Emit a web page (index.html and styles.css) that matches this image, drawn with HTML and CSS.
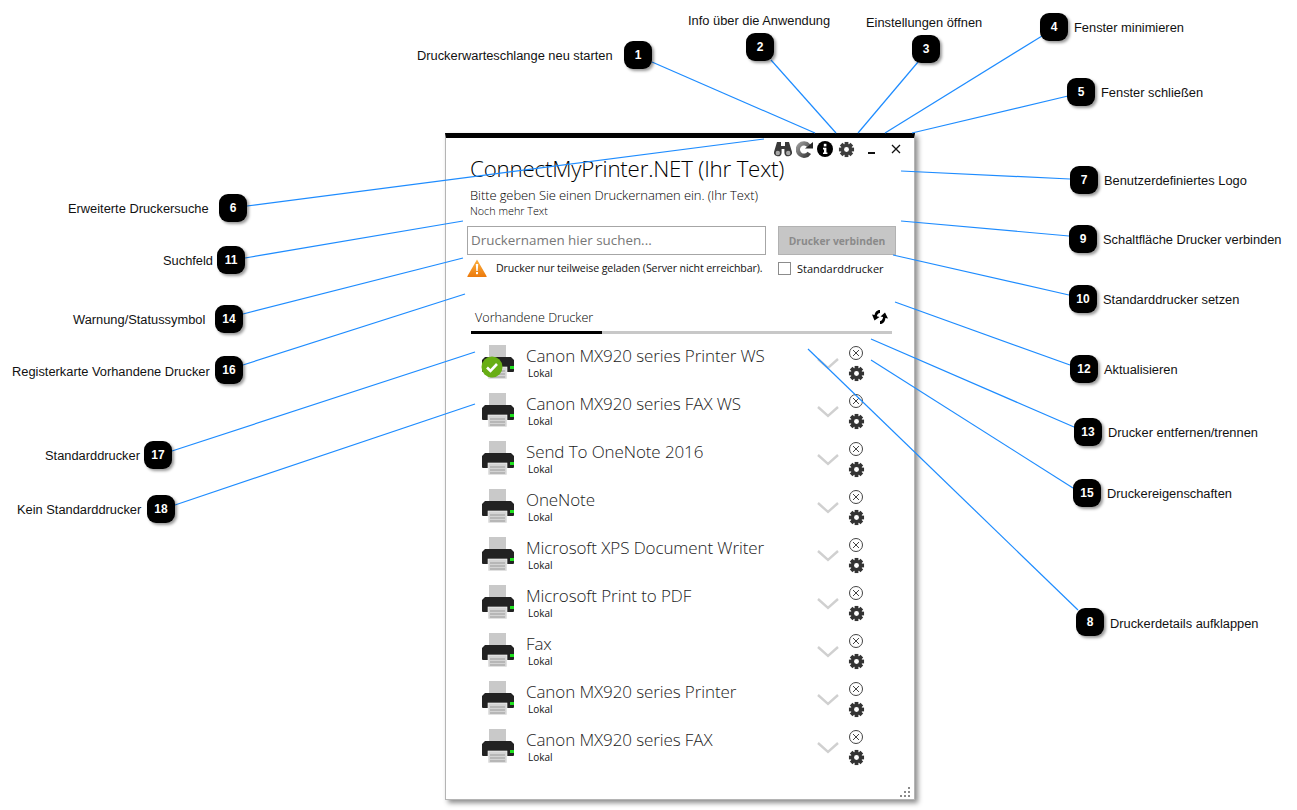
FILE: index.html
```html
<!DOCTYPE html>
<html lang="de">
<head>
    <meta charset="UTF-8">
    <title>ConnectMyPrinter.NET</title>
    <link rel="stylesheet" href="styles.css">
</head>
<body>
<svg class="defs" width="0" height="0">
    <symbol id="gear" viewBox="-9 -9 18 18">
        <g fill="currentColor">
            <rect x="-2" y="-8" width="4" height="16"/>
            <rect x="-2" y="-8" width="4" height="16" transform="rotate(45)"/>
            <rect x="-2" y="-8" width="4" height="16" transform="rotate(90)"/>
            <rect x="-2" y="-8" width="4" height="16" transform="rotate(135)"/>
            <circle r="6"/>
        </g>
        <circle r="2.6" fill="#fff"/>
    </symbol>
    <symbol id="printer" viewBox="0 0 34 36">
        <rect x="8" y="1" width="17" height="14" fill="#c9c9c9"/>
        <path d="M4 13h26l3 3v11a1 1 0 0 1-1 1H2a1 1 0 0 1-1-1V16z" fill="#222"/>
        <rect x="29" y="22" width="4" height="3" fill="#1fe01f"/>
        <rect x="7" y="23" width="19" height="12" fill="#d4d4d4" stroke="#fff" stroke-width=".6"/>
        <path d="M9 27h15M9 30h15M9 33h15" stroke="#9a9a9a"/>
    </symbol>
    <symbol id="remove" viewBox="0 0 16 16">
        <circle cx="8" cy="8" r="6.5" fill="none" stroke="#444"/>
        <path d="M5 5l6 6M11 5l-6 6" stroke="#444" fill="none"/>
    </symbol>
    <symbol id="chevron" viewBox="0 0 24 14">
        <path d="M2 2l10 9 10-9" fill="none" stroke="#d0d0d0" stroke-width="2.4"/>
    </symbol>
</svg>

<div class="window">
    <div class="toolbar">
        <svg class="tool tool-find" viewBox="0 0 18 16">
            <path d="M3 1h4v4h4V1h4l3 10a3.800 3.800 0 1 1-7.600 1V8H7.600v4A3.800 3.800 0 1 1 0 11z" fill="#3a3a3a"/>
            <circle cx="3.800" cy="12" r="2.200" fill="#a8a8a8"/>
            <circle cx="14.200" cy="12" r="2.200" fill="#a8a8a8"/>
        </svg>
        <svg class="tool tool-reload" viewBox="0 0 18 18">
            <defs>
                <linearGradient id="reload-fill" x1="0" y1="0" x2="1" y2="1">
                    <stop offset="0" stop-color="#9a9a9a"/>
                    <stop offset="1" stop-color="#3c3c3c"/>
                </linearGradient>
            </defs>
            <path d="M14 12.500a6.500 6.500 0 1 1-.5-7.500" fill="none" stroke="url(#reload-fill)" stroke-width="4.500"/>
            <path d="M9.500 8L18 1v7z" fill="#2a2a2a"/>
        </svg>
        <svg class="tool tool-info" viewBox="0 0 16 16">
            <circle cx="8" cy="8" r="8" fill="#000"/>
            <rect x="6.800" y="2.800" width="2.600" height="2.600" fill="#fff"/>
            <path d="M6 6.800h3.400v4.600h1V13H6v-1.600h1V8.400H6z" fill="#fff"/>
        </svg>
        <svg class="tool tool-gear"><use href="#gear"/></svg>
        <span class="tool-min"></span>
        <svg class="tool tool-close" viewBox="0 0 10 10">
            <path d="M1 1l8 8M9 1l-8 8" stroke="#111" stroke-width="1.300"/>
        </svg>
    </div>

    <div class="head">
        <h1>ConnectMyPrinter.NET (Ihr Text)</h1>
        <p class="sub">Bitte geben Sie einen Druckernamen ein. (Ihr Text)</p>
        <p class="more">Noch mehr Text</p>
    </div>

    <div class="search-row">
        <div class="search">Druckernamen hier suchen...</div>
        <button class="connect">Drucker verbinden</button>
    </div>

    <div class="status-row">
        <svg class="warn" viewBox="0 0 20 18">
            <defs>
                <linearGradient id="warn-fill" x1="0" y1="0" x2="0" y2="1">
                    <stop offset="0" stop-color="#fbb040"/>
                    <stop offset="1" stop-color="#ec7a0c"/>
                </linearGradient>
            </defs>
            <path d="M10 0.500l9.500 16.500a.6.6 0 0 1-.5 1H1a.6.6 0 0 1-.5-1z" fill="url(#warn-fill)"/>
            <path d="M8.800 5h2.400l-.5 7H9.300z" fill="#fff"/>
            <rect x="9" y="13" width="2" height="2.200" fill="#fff"/>
        </svg>
        <span class="status-text">Drucker nur teilweise geladen (Server nicht erreichbar).</span>
        <label class="default-check"><span class="box"></span>Standarddrucker</label>
    </div>

    <div class="tabs">
        <div class="tab-head">
            <span class="tab-title">Vorhandene Drucker</span>
            <svg class="refresh" viewBox="0 0 18 18">
                <path d="M9 2C5.500 2 4 4.500 3.600 7L1 6.500l2.500 6 5-3.500-2.600-.8C6.200 6.500 7.200 5 9 5z" fill="#000"/>
                <path d="M9 16c3.500 0 5-2.500 5.400-6L17 10.500 14 4.500 9.500 8.500l2.600.5C11.800 11 10.800 13 9 13z" fill="#000"/>
            </svg>
        </div>
        <div class="tab-line"><div class="tab-line-on"></div></div>
    </div>

    <ul class="printers">
        <li class="printer">
            <div class="p-icon">
                <svg class="p-img"><use href="#printer"/></svg>
                <svg class="p-ok" viewBox="0 0 22 22">
                    <circle cx="11" cy="11" r="10.500" fill="#68ae14"/>
                    <path d="M6 11.500l3.500 3.500 6.500-7" fill="none" stroke="#fff" stroke-width="2.600"/>
                </svg>
            </div>
            <div class="p-text"><div class="p-name">Canon MX920 series Printer WS</div><div class="p-loc">Lokal</div></div>
            <svg class="p-chev"><use href="#chevron"/></svg>
            <div class="p-actions"><svg class="p-x"><use href="#remove"/></svg><svg class="p-gear"><use href="#gear"/></svg></div>
        </li>
        <li class="printer">
            <div class="p-icon"><svg class="p-img"><use href="#printer"/></svg></div>
            <div class="p-text"><div class="p-name">Canon MX920 series FAX WS</div><div class="p-loc">Lokal</div></div>
            <svg class="p-chev"><use href="#chevron"/></svg>
            <div class="p-actions"><svg class="p-x"><use href="#remove"/></svg><svg class="p-gear"><use href="#gear"/></svg></div>
        </li>
        <li class="printer">
            <div class="p-icon"><svg class="p-img"><use href="#printer"/></svg></div>
            <div class="p-text"><div class="p-name">Send To OneNote 2016</div><div class="p-loc">Lokal</div></div>
            <svg class="p-chev"><use href="#chevron"/></svg>
            <div class="p-actions"><svg class="p-x"><use href="#remove"/></svg><svg class="p-gear"><use href="#gear"/></svg></div>
        </li>
        <li class="printer">
            <div class="p-icon"><svg class="p-img"><use href="#printer"/></svg></div>
            <div class="p-text"><div class="p-name">OneNote</div><div class="p-loc">Lokal</div></div>
            <svg class="p-chev"><use href="#chevron"/></svg>
            <div class="p-actions"><svg class="p-x"><use href="#remove"/></svg><svg class="p-gear"><use href="#gear"/></svg></div>
        </li>
        <li class="printer">
            <div class="p-icon"><svg class="p-img"><use href="#printer"/></svg></div>
            <div class="p-text"><div class="p-name">Microsoft XPS Document Writer</div><div class="p-loc">Lokal</div></div>
            <svg class="p-chev"><use href="#chevron"/></svg>
            <div class="p-actions"><svg class="p-x"><use href="#remove"/></svg><svg class="p-gear"><use href="#gear"/></svg></div>
        </li>
        <li class="printer">
            <div class="p-icon"><svg class="p-img"><use href="#printer"/></svg></div>
            <div class="p-text"><div class="p-name">Microsoft Print to PDF</div><div class="p-loc">Lokal</div></div>
            <svg class="p-chev"><use href="#chevron"/></svg>
            <div class="p-actions"><svg class="p-x"><use href="#remove"/></svg><svg class="p-gear"><use href="#gear"/></svg></div>
        </li>
        <li class="printer">
            <div class="p-icon"><svg class="p-img"><use href="#printer"/></svg></div>
            <div class="p-text"><div class="p-name">Fax</div><div class="p-loc">Lokal</div></div>
            <svg class="p-chev"><use href="#chevron"/></svg>
            <div class="p-actions"><svg class="p-x"><use href="#remove"/></svg><svg class="p-gear"><use href="#gear"/></svg></div>
        </li>
        <li class="printer">
            <div class="p-icon"><svg class="p-img"><use href="#printer"/></svg></div>
            <div class="p-text"><div class="p-name">Canon MX920 series Printer</div><div class="p-loc">Lokal</div></div>
            <svg class="p-chev"><use href="#chevron"/></svg>
            <div class="p-actions"><svg class="p-x"><use href="#remove"/></svg><svg class="p-gear"><use href="#gear"/></svg></div>
        </li>
        <li class="printer">
            <div class="p-icon"><svg class="p-img"><use href="#printer"/></svg></div>
            <div class="p-text"><div class="p-name">Canon MX920 series FAX</div><div class="p-loc">Lokal</div></div>
            <svg class="p-chev"><use href="#chevron"/></svg>
            <div class="p-actions"><svg class="p-x"><use href="#remove"/></svg><svg class="p-gear"><use href="#gear"/></svg></div>
        </li>
    </ul>

    <svg class="grip" viewBox="0 0 10 10">
        <path d="M8 0h2v2H8zM4 4h2v2H4zM8 4h2v2H8zM0 8h2v2H0zM4 8h2v2H4zM8 8h2v2H8z" fill="#8a8a8a"/>
    </svg>
</div>

<!-- Verbindungslinien der Beschriftungen -->
<svg class="leaders" viewBox="0 0 1297 810">
    <g stroke="#1e8cff" stroke-width="1.200">
        <line x1="652" y1="62" x2="815" y2="133"/>
        <line x1="771" y1="60" x2="836" y2="133"/>
        <line x1="918" y1="62" x2="858" y2="133"/>
        <line x1="1042" y1="36" x2="885" y2="133"/>
        <line x1="1068" y1="96" x2="912" y2="133"/>
        <line x1="247" y1="206" x2="764" y2="139"/>
        <line x1="1070" y1="179" x2="901" y2="171"/>
        <line x1="1078" y1="610" x2="808" y2="349"/>
        <line x1="1069" y1="236" x2="901" y2="221"/>
        <line x1="1069" y1="295" x2="893" y2="255"/>
        <line x1="245" y1="258" x2="463" y2="221"/>
        <line x1="1070" y1="365" x2="895" y2="302"/>
        <line x1="1074" y1="427" x2="871" y2="339"/>
        <line x1="243" y1="314" x2="463" y2="258"/>
        <line x1="1073" y1="488" x2="871" y2="360"/>
        <line x1="243" y1="365" x2="465" y2="294"/>
        <line x1="172" y1="451" x2="475" y2="352"/>
        <line x1="175" y1="505" x2="475" y2="404"/>
    </g>
</svg>

<span class="label l1">Druckerwarteschlange neu starten</span><span class="badge b1">1</span>
<span class="label l2">Info über die Anwendung</span><span class="badge b2">2</span>
<span class="label l3">Einstellungen öffnen</span><span class="badge b3">3</span>
<span class="label l4">Fenster minimieren</span><span class="badge b4">4</span>
<span class="label l5">Fenster schließen</span><span class="badge b5">5</span>
<span class="label l6">Erweiterte Druckersuche</span><span class="badge b6">6</span>
<span class="label l7">Benutzerdefiniertes Logo</span><span class="badge b7">7</span>
<span class="label l8">Druckerdetails aufklappen</span><span class="badge b8">8</span>
<span class="label l9">Schaltfläche Drucker verbinden</span><span class="badge b9">9</span>
<span class="label l10">Standarddrucker setzen</span><span class="badge b10">10</span>
<span class="label l11">Suchfeld</span><span class="badge b11">11</span>
<span class="label l12">Aktualisieren</span><span class="badge b12">12</span>
<span class="label l13">Drucker entfernen/trennen</span><span class="badge b13">13</span>
<span class="label l14">Warnung/Statussymbol</span><span class="badge b14">14</span>
<span class="label l15">Druckereigenschaften</span><span class="badge b15">15</span>
<span class="label l16">Registerkarte Vorhandene Drucker</span><span class="badge b16">16</span>
<span class="label l17">Standarddrucker</span><span class="badge b17">17</span>
<span class="label l18">Kein Standarddrucker</span><span class="badge b18">18</span>
</body>
</html>
```

FILE: styles.css
```css
*{
    margin: 0;
    padding: 0;
    box-sizing: border-box;
    list-style: none;
}
html,body{
    width: 100%;
    height: 810px;
    overflow: hidden;
    background-color: #fff;
}
body{
    position: relative;
    font-family: "Liberation Sans", Arial, sans-serif;
}
.defs{
    position: absolute;
}

/* Fenster */
.window{
    position: absolute;
    left: 445px;
    top: 133px;
    width: 470px;
    height: 667px;
    background-color: #fff;
    border: 1px solid #b4b4b4;
    border-top: 5px solid #000;
    box-shadow: 3px 3px 5px rgba(0,0,0,.45);
    font-family: "Open Sans", "Noto Sans", sans-serif;
    color: #111;
}
.toolbar{
    display: flex;
    align-items: center;
    height: 20px;
    margin-top: 1px;
    padding-left: 328px;
}
.tool{
    display: block;
    flex: none;
}
.tool-find{
    width: 18px;
    height: 16px;
}
.tool-reload{
    width: 17px;
    height: 17px;
    margin-left: 4px;
}
.tool-info{
    width: 16px;
    height: 16px;
    margin-left: 4px;
}
.tool-gear{
    width: 17px;
    height: 17px;
    margin-left: 5px;
    color: #3c3c3c;
}
.tool-min{
    width: 7px;
    height: 2px;
    margin: 7px 0 0 13px;
    background-color: #111;
}
.tool-close{
    width: 10px;
    height: 10px;
    margin-left: 16px;
}

.head{
    padding: 0 0 0 24px;
    height: 69px;
}
h1{
    margin-top: -3px;
    font-size: 22.300px;
    font-weight: 300;
    line-height: 26px;
    white-space: nowrap;
    letter-spacing: -.2px;
    color: #000;
}
.sub{
    margin-top: 5px;
    font-size: 13px;
    font-weight: 300;
    line-height: 16px;
    letter-spacing: -.1px;
    color: #000;
}
.more{
    margin-top: 1px;
    font-size: 10.800px;
    line-height: 14px;
    font-weight: 300;
    color: #000;
}

.search-row{
    display: flex;
    padding-left: 21px;
    margin-top: 1px;
}
.search{
    width: 299px;
    height: 29px;
    padding-left: 3px;
    border: 1px solid #a6a6a6;
    font-size: 13.400px;
    font-weight: 400;
    line-height: 27px;
    color: #777;
}
.connect{
    width: 118px;
    height: 29px;
    margin-left: 12px;
    border: 1px solid #b2b2b2;
    background-color: #c6c6c6;
    font-family: "Open Sans", sans-serif;
    font-size: 10.300px;
    font-weight: 700;
    color: #8a8a8a;
}
.status-row{
    display: flex;
    align-items: center;
    height: 24px;
    padding-left: 21px;
    margin-top: 1px;
}
.warn{
    flex: none;
    width: 20px;
    height: 18px;
}
.status-text{
    width: 291px;
    padding-left: 9px;
    font-size: 10.600px;
    font-weight: 400;
    white-space: nowrap;
    letter-spacing: -.1px;
}
.default-check{
    display: flex;
    align-items: center;
    font-size: 11px;
}
.box{
    width: 13px;
    height: 13px;
    margin-right: 6px;
    border: 1px solid #8c8c8c;
}

.tabs{
    padding: 0 22px 0 25px;
    margin-top: 23px;
}
.tab-head{
    display: flex;
    align-items: center;
    justify-content: space-between;
    height: 28px;
    padding: 0 3px 0 4px;
}
.tab-title{
    font-size: 12.600px;
    font-weight: 300;
    color: #000;
}
.refresh{
    width: 18px;
    height: 18px;
}
.tab-line{
    height: 3px;
    background-color: #c8c8c8;
}
.tab-line-on{
    width: 131px;
    height: 3px;
    background-color: #000;
}

/* Druckerliste */
.printers{
    margin-top: 9px;
}
.printer{
    display: flex;
    height: 48px;
    padding-left: 35px;
}
.p-icon{
    position: relative;
    flex: none;
    width: 34px;
    height: 36px;
    margin-top: 1px;
}
.p-img{
    display: block;
    width: 34px;
    height: 36px;
}
.p-ok{
    position: absolute;
    left: 0;
    top: 12px;
    width: 22px;
    height: 22px;
}
.p-text{
    width: 291px;
    padding-left: 11px;
}
.p-name{
    font-size: 17px;
    font-weight: 300;
    line-height: 22px;
    margin-top: 2px;
    color: #222;
    letter-spacing: -.1px;
}
.p-loc{
    padding-left: 2px;
    font-size: 10px;
    line-height: 12px;
    color: #111;
}
.p-chev{
    flex: none;
    width: 24px;
    height: 14px;
    margin: 14px 0 0 10px;
}
.p-actions{
    display: flex;
    flex-direction: column;
    align-items: center;
    width: 16px;
    margin-left: 8px;
    margin-top: 2px;
}
.p-x{
    width: 16px;
    height: 16px;
}
.p-gear{
    width: 17px;
    height: 17px;
    margin-top: 4px;
    color: #333;
}
.grip{
    position: absolute;
    right: 4px;
    bottom: 2px;
    width: 10px;
    height: 10px;
}

/* Beschriftungen */
.leaders{
    position: absolute;
    left: 0;
    top: 0;
    width: 1297px;
    height: 810px;
}
.label{
    position: absolute;
    margin-top: 1px;
    font-size: 12.850px;
    line-height: 14px;
    white-space: nowrap;
    color: #111;
}
.badge{
    position: absolute;
    display: flex;
    align-items: center;
    justify-content: center;
    width: 28px;
    height: 28px;
    border-radius: 9px;
    background-color: #000;
    box-shadow: 2px 2px 3px rgba(0,0,0,.4);
    color: #fff;
    font-size: 12px;
    font-weight: 700;
}
.l1{left: 417px; top: 48px;}
.b1{left: 624px; top: 41px;}
.l2{left: 688px; top: 13px;}
.b2{left: 746px; top: 33px;}
.l3{left: 866px; top: 15px;}
.b3{left: 912px; top: 35px;}
.l4{left: 1074px; top: 20px;}
.b4{left: 1040px; top: 13px;}
.l5{left: 1101px; top: 85px;}
.b5{left: 1067px; top: 78px;}
.l6{left: 68px; top: 201px;}
.b6{left: 219px; top: 194px;}
.l7{left: 1104px; top: 173px;}
.b7{left: 1070px; top: 166px;}
.l8{left: 1110px; top: 616px;}
.b8{left: 1076px; top: 608px;}
.l9{left: 1103px; top: 232px;}
.b9{left: 1069px; top: 225px;}
.l10{left: 1103px; top: 292px;}
.b10{left: 1069px; top: 285px;}
.l11{left: 163px; top: 253px;}
.b11{left: 217px; top: 246px;}
.l12{left: 1104px; top: 362px;}
.b12{left: 1070px; top: 355px;}
.l13{left: 1108px; top: 425px;}
.b13{left: 1074px; top: 418px;}
.l14{left: 73px; top: 312px;}
.b14{left: 215px; top: 305px;}
.l15{left: 1107px; top: 486px;}
.b15{left: 1073px; top: 479px;}
.l16{left: 12px; top: 364px;}
.b16{left: 215px; top: 356px;}
.l17{left: 45px; top: 448px;}
.b17{left: 144px; top: 441px;}
.l18{left: 17px; top: 502px;}
.b18{left: 147px; top: 495px;}
```
